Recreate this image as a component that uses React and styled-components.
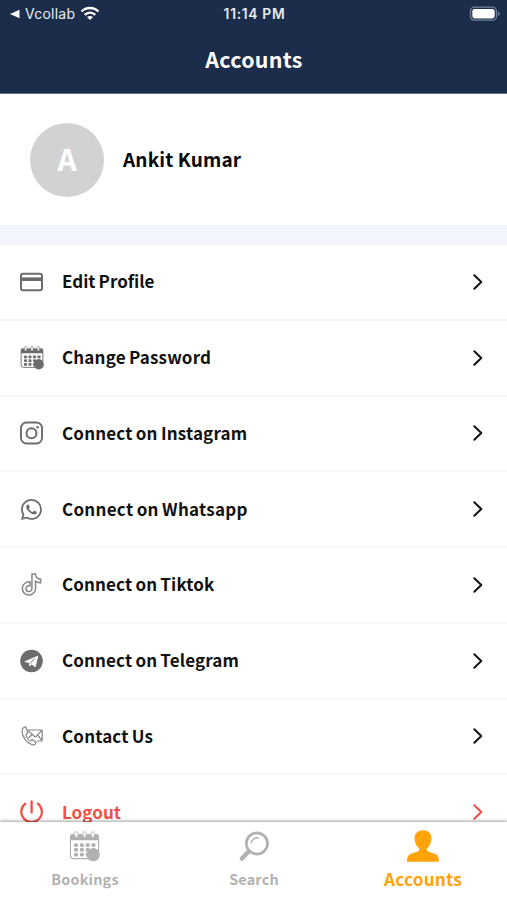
import React from "react";
import styled, { createGlobalStyle } from "styled-components";
import { BsWhatsapp } from "react-icons/bs";
import { SiTiktok } from "react-icons/si";

const GlobalStyle = createGlobalStyle`
  * {
    box-sizing: border-box;
  }

  body {
    margin: 0;
    background: #fff;
    font-family: "Noto Sans CJK SC", "Noto Sans", sans-serif;
  }
`;

const Screen = styled.div`
  width: 100%;
  height: 900px;
  display: flex;
  flex-direction: column;
  overflow: hidden;
  background: #fff;
`;

const Header = styled.header`
  flex: none;
  height: 94px;
  background: #1b2d4b;
  border-bottom: 1px solid #62708a;
  color: #fff;
`;

const StatusBar = styled.div`
  height: 28px;
  padding: 0 7px 0 10px;
  display: grid;
  grid-template-columns: 1fr auto 1fr;
  align-items: center;
  font-family: Inter, sans-serif;
  font-size: 14px;
  line-height: 28px;
  color: #e6ebf4;
`;

const BackToApp = styled.div`
  display: flex;
  align-items: center;
  letter-spacing: 0.25px;

  svg:first-child {
    margin-right: 5px;
  }

  svg:last-child {
    margin-left: 5px;
    margin-bottom: 2px;
  }
`;

const Clock = styled.div`
  padding-right: 1px;
  font-size: 13.8px;
  font-weight: 600;
  letter-spacing: 0.7px;
`;

const Battery = styled.svg`
  justify-self: end;
  margin-bottom: 1px;
`;

const Title = styled.h1`
  margin: 0;
  height: 65px;
  line-height: 62px;
  padding-left: 1px;
  text-align: center;
  font-size: 21.4px;
  font-weight: 700;
  letter-spacing: 0.3px;
`;

const Profile = styled.section`
  flex: none;
  height: 131px;
  padding-left: 30px;
  display: flex;
  align-items: center;
  gap: 19px;
`;

const Avatar = styled.div`
  width: 74px;
  height: 74px;
  border-radius: 50%;
  background: #d2d2d2;
  color: #fff;
  font-size: 30px;
  font-weight: 700;
  line-height: 71px;
  text-align: center;
`;

const Name = styled.div`
  padding-bottom: 2px;
  font-size: 19px;
  font-weight: 700;
  letter-spacing: 0.15px;
  color: #080808;
`;

const Band = styled.div`
  flex: none;
  height: 20px;
  background: #f2f5fd;
`;

const Menu = styled.ul`
  flex: 1;
  min-height: 0;
  margin: 0;
  padding: 0;
  list-style: none;
  overflow: hidden;
`;

const MenuItem = styled.li`
  height: 75.75px;
  padding: 0 23px 0 19px;
  display: flex;
  align-items: center;
  border-bottom: 2px solid #f5f7fa;
  color: ${(props) => (props.$danger ? "#ef5145" : "#111")};
`;

const MenuIcon = styled.span`
  width: 25px;
  height: 26px;
  margin-right: 18px;
  display: flex;
  align-items: center;
  justify-content: center;
  color: ${(props) => (props.$danger ? "#ef5145" : "#6c6c6e")};
`;

const MenuLabel = styled.span`
  flex: 1;
  padding-bottom: 1px;
  font-size: 17px;
  line-height: 20px;
  font-weight: 700;
  letter-spacing: ${(props) => props.$tracking ?? 0.17}px;
  word-spacing: -0.8px;
`;

const TabBar = styled.nav`
  flex: none;
  position: relative;
  height: 78px;
  display: grid;
  grid-template-columns: repeat(3, 1fr);
  background: #fff;
  box-shadow: 0 -1px 3px rgba(0, 0, 0, 0.38);
`;

const Tab = styled.div`
  padding-top: 7px;
  display: flex;
  flex-direction: column;
  align-items: center;
  color: ${(props) => (props.$active ? "#ffa408" : "#b1b1b1")};
`;

const TabIcon = styled.span`
  height: 34px;
  display: flex;
  align-items: center;
`;

const TabLabel = styled.span`
  margin-top: 4px;
  padding-left: 1px;
  height: 24px;
  line-height: 24px;
  font-weight: 700;
  font-size: ${(props) => (props.$active ? 17.2 : 14.4)}px;
  letter-spacing: 0.2px;
`;

const WifiIcon = () => (
  <svg width="20" height="15" viewBox="0 0 20 15" fill="none" stroke="#fff" strokeWidth="2.3">
    <path d="M1.500 5.500C6.200.8 13.800.8 18.500 5.500" />
    <path d="M4.700 8.800c3-2.900 7.600-2.900 10.600 0" />
    <path d="M7 11.100c1.700-1.600 4.300-1.600 6 0l-3 3z" fill="#fff" stroke="none" />
  </svg>
);

const CardIcon = () => (
  <svg width="24" height="20" viewBox="0 0 24 20" fill="none" stroke="currentColor">
    <rect x="1" y="1.700" width="21" height="16.600" rx="2.200" strokeWidth="2" />
    <path d="M2 7.200h19" strokeWidth="3.600" />
  </svg>
);

const CalendarIcon = ({ size = 24 }) => (
  <svg width={size} height={size} viewBox="0 0 32 32" fill="currentColor">
    <path d="M1 9.500V5.500Q1 3 3.500 3H5a2.800 3.500 0 0 0 5 0h3.500a2.800 3.500 0 0 0 5 0H22a2.800 3.500 0 0 0 5 0h1.500Q31 3 31 5.500V9.500z" />
    <path
      d="M1.500 9v16.500q0 3 3 3H20M30.500 9v12"
      fill="none"
      stroke="currentColor"
      strokeWidth="1.200"
    />
    {[7.5, 16, 24.5].map((x) => (
      <rect
        key={x}
        x={x - 1.5}
        y="0.600"
        width="3"
        height="6"
        rx="1.500"
        fill="#fff"
        stroke="currentColor"
        strokeWidth=".8"
      />
    ))}
    {[12.6, 17.6, 22.6].map((y) =>
      [5.3, 11.3, 17.3, 23.3].map((x) => (
        <rect key={`${x}-${y}`} x={x} y={y} width="4" height="3.800" rx="1.200" />
      ))
    )}
    <circle cx="25" cy="24.500" r="6.800" />
  </svg>
);

const InstagramIcon = () => (
  <svg width="24" height="24" viewBox="0 0 24 24" fill="none" stroke="currentColor">
    <rect x="1" y="1.500" width="21" height="21" rx="5.500" strokeWidth="1.900" />
    <circle cx="11.500" cy="12.300" r="5" strokeWidth="2" />
    <circle cx="17.600" cy="6.200" r="1.300" fill="currentColor" stroke="none" />
  </svg>
);

const TiktokIcon = styled(SiTiktok)`
  overflow: visible;
`;

const TelegramIcon = () => (
  <svg width="24" height="24" viewBox="0 0 24 24">
    <circle cx="11.500" cy="12" r="11.300" fill="currentColor" />
    <path
      d="M4.800 12.300 17.200 6.900q1.100-.4.900.8l-2.300 9.600q-.3 1-1.200.4l-2.900-2.200-1.600 1.700q-.6.400-.7-.4l-.5-2.700-4-1.200q-.8-.3-.1-.600z"
      fill="#fff"
    />
    <path d="M9.300 14.200 14.800 9.400 10.200 15" fill="none" stroke="currentColor" strokeWidth=".5" />
  </svg>
);

const ContactIcon = () => (
  <svg
    width="24"
    height="24"
    viewBox="0 0 24 24"
    fill="none"
    stroke="#858585"
    strokeWidth="1.200"
    strokeLinejoin="round"
    strokeLinecap="round"
  >
    <path d="M4 3.200Q1.900 4.600 2 7.300c.3 5.700 5 12 10.300 13.500 1.600.4 3-.3 3.700-1.700.3-.6.100-1-.5-1.400l-2.700-1.800c-.7-.4-1.200-.1-1.600.4-.7.800-1.300.6-2.200-.2-1.500-1.400-2.500-3.200-3-5-.2-.8.200-1.200.9-1.500.7-.3.900-.8.700-1.500L6.300 4.300C5.900 3.200 5.200 2.600 4 3.200z" />
    <path d="M8.800 6H21.200q1 0 1 1v9q0 1-1 1h-4M8.800 6q-.7.500-.2 1.100l5.800 5.100q1 .8 2 0L21.900 6.300M9 13.500l3-2.800M18 11.500l3.700 4.500" />
  </svg>
);

const PowerIcon = () => (
  <svg
    width="24"
    height="24"
    viewBox="0 0 24 24"
    fill="none"
    stroke="currentColor"
    strokeWidth="2.300"
    strokeLinecap="round"
  >
    <path d="M11.600 1.500v11M5.300 3.700a10.300 10.300 0 1 0 12.600 0" />
  </svg>
);

const Chevron = () => (
  <svg width="12" height="18" viewBox="0 0 12 18" fill="none" stroke="currentColor">
    <path d="m2.300 2.300 7 6.700-7 6.700" strokeWidth="2" strokeLinecap="round" strokeLinejoin="round" />
  </svg>
);

const SearchIcon = () => (
  <svg width="32" height="34" viewBox="0 0 32 34" fill="none" stroke="currentColor">
    <circle cx="18.900" cy="14.500" r="10.600" strokeWidth="2.700" />
    <path d="M13.400 13.300a6 6 0 0 1 6.700-4.300" strokeWidth="1.700" strokeLinecap="round" />
    <path d="m10.900 22.300-7 7.300" strokeWidth="4.500" strokeLinecap="round" />
  </svg>
);

const UserIcon = () => (
  <svg width="34" height="34" viewBox="0 0 34 34" fill="currentColor">
    <path d="M17 1.300c-5.600 0-8.800 3.800-8.400 8.600.2 4 2 7.400 4.800 9.600 0 1.800-.6 2.600-2.400 3.300l-5.600 2C2 26 1 28 1 32.800h32c0-4.800-1-6.800-4.400-8l-5.600-2c-1.800-.7-2.400-1.500-2.400-3.300 2.800-2.200 4.600-5.600 4.800-9.600.4-4.800-2.800-8.600-8.400-8.600z" />
  </svg>
);

const items = [
  { label: "Edit Profile", icon: <CardIcon />, tracking: 0 },
  { label: "Change Password", icon: <CalendarIcon /> },
  { label: "Connect on Instagram", icon: <InstagramIcon /> },
  { label: "Connect on Whatsapp", icon: <BsWhatsapp size={21} />, tracking: 0.28 },
  {
    label: "Connect on Tiktok",
    icon: <TiktokIcon size={21} fill="none" stroke="#858585" strokeWidth={1.7} />,
    tracking: 0.12,
  },
  { label: "Connect on Telegram", icon: <TelegramIcon />, tracking: 0.12 },
  { label: "Contact Us", icon: <ContactIcon /> },
  { label: "Logout", icon: <PowerIcon />, tracking: 0.05, danger: true },
];

const tabs = [
  { label: "Bookings", icon: <CalendarIcon size={31} /> },
  { label: "Search", icon: <SearchIcon /> },
  { label: "Accounts", icon: <UserIcon />, active: true },
];

const App = () => {
  return (
    <Screen>
      <GlobalStyle />
      <Header>
        <StatusBar>
          <BackToApp>
            <svg width="10" height="10" viewBox="0 0 10 10" fill="#fff">
              <path d="M0 5 9.500.8v8.400z" />
            </svg>
            Vcollab
            <WifiIcon />
          </BackToApp>
          <Clock>11:14 PM</Clock>
          <Battery width="31" height="16" viewBox="0 0 31 16">
            <rect x="1.500" y="1.200" width="26" height="13" rx="4" fill="none" stroke="#76829a" strokeWidth="1.300" />
            <rect x="3.300" y="3" width="22.400" height="9.400" rx="2.300" fill="#fff" />
            <path d="M29 5.500q3.400 2.200 0 4.500z" fill="#76829a" />
          </Battery>
        </StatusBar>
        <Title>Accounts</Title>
      </Header>
      <Profile>
        <Avatar>A</Avatar>
        <Name>Ankit Kumar</Name>
      </Profile>
      <Band />
      <Menu>
        {items.map((item) => (
          <MenuItem key={item.label} $danger={item.danger}>
            <MenuIcon $danger={item.danger}>{item.icon}</MenuIcon>
            <MenuLabel $tracking={item.tracking}>{item.label}</MenuLabel>
            <Chevron />
          </MenuItem>
        ))}
      </Menu>
      <TabBar>
        {tabs.map((tab) => (
          <Tab key={tab.label} $active={tab.active}>
            <TabIcon>{tab.icon}</TabIcon>
            <TabLabel $active={tab.active}>{tab.label}</TabLabel>
          </Tab>
        ))}
      </TabBar>
    </Screen>
  );
};

export default App;
